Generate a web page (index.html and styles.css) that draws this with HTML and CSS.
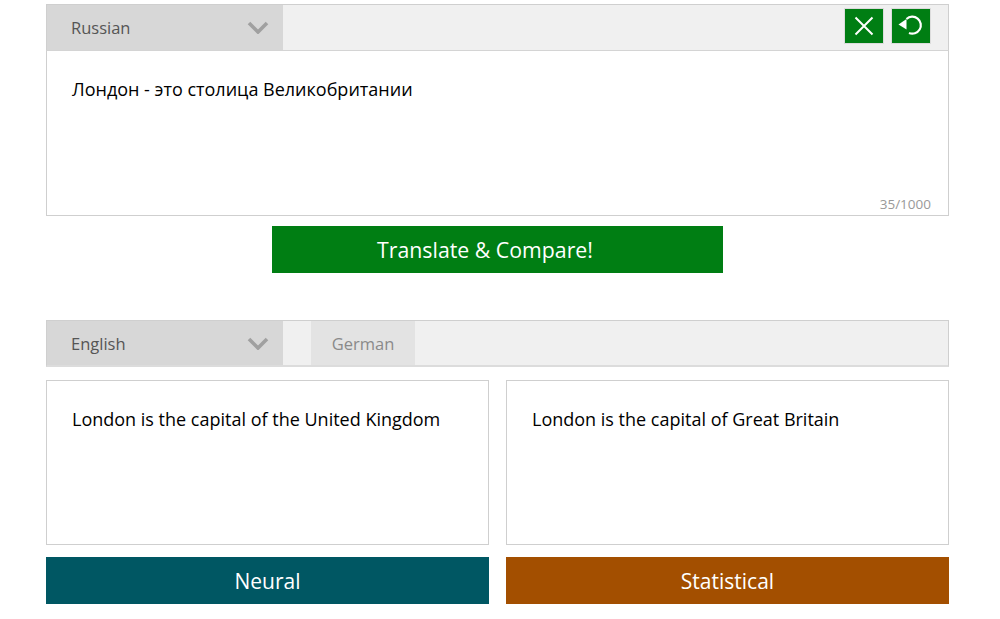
FILE: index.html
```html
<!DOCTYPE html>
<html lang="en">
<head>
<meta charset="utf-8">
<title>Translate &amp; Compare</title>
<link rel="stylesheet" href="styles.css">
</head>
<body>
<main class="page">
  <section class="source">
    <div class="bar bar-source">
      <div class="select"><span>Russian</span>
        <svg class="chev" width="22" height="13" viewBox="0 0 22 13"><path d="M2 2l9 9 9-9" fill="none" stroke="#a0a0a0" stroke-width="3.6"/></svg>
      </div>
      <div class="tools">
        <button class="tool" aria-label="Clear"><svg width="20" height="20" viewBox="0 0 20 20"><path d="M1.500 1.500l17 17M18.500 1.500l-17 17" fill="none" stroke="#fff" stroke-width="2"/></svg></button>
        <button class="tool" aria-label="Undo"><svg width="26" height="26" viewBox="0 0 26 26"><path d="M8.500 6a8.500 8.500 0 1 1 2.500 14" fill="none" stroke="#fff" stroke-width="2.200"/><path d="M0.500 11.500l8-5.500v10.500z" fill="#fff"/></svg></button>
      </div>
    </div>
    <div class="input-area">
      <p class="text">Лондон - это столица Великобритании</p>
      <span class="count">35/1000</span>
    </div>
  </section>
  <button class="cta">Translate &amp; Compare!</button>
  <div class="bar bar-target">
    <div class="select"><span>English</span>
      <svg class="chev" width="22" height="13" viewBox="0 0 22 13"><path d="M2 2l9 9 9-9" fill="none" stroke="#a0a0a0" stroke-width="3.6"/></svg>
    </div>
    <div class="tab">German</div>
  </div>
  <div class="results">
    <div class="result">
      <div class="output"><p class="text">London is the capital of the United Kingdom</p></div>
      <div class="label neural">Neural</div>
    </div>
    <div class="result">
      <div class="output"><p class="text">London is the capital of Great Britain</p></div>
      <div class="label statistical">Statistical</div>
    </div>
  </div>
</main>
</body>
</html>
```
FILE: styles.css
```css
* { box-sizing: border-box; }
html, body { margin: 0; background: #fff; }
body { font-family: "Open Sans", "Noto Sans", sans-serif; color: #000; }
.page { width: 903px; margin-left: 46px; padding-top: 4px; display: flex; flex-direction: column; }
.source { display: flex; flex-direction: column; }
.bar { height: 47px; background: #f0f0f0; border: 1px solid #cfcfcf; display: flex; align-items: stretch; }
.bar-source { border-bottom-color: #d4d4d4; justify-content: space-between; }
.bar-target { margin-top: 47px; border-bottom: 2px solid #dcdcdc; }
.select { width: 236px; background: #d7d7d7; display: flex; align-items: center; justify-content: space-between; padding: 0 14px 0 24px; font-size: 16.500px; color: #555; }
.tools { display: flex; align-items: center; gap: 7px; padding: 0 17px 3px 0; }
.tool { width: 40px; height: 36px; padding: 0; border: 1px solid #dcdcdc; background: #007e13; display: flex; align-items: center; justify-content: center; }
.input-area { position: relative; height: 165px; border: 1px solid #cfcfcf; border-top: 0; padding: 26px 25px; }
.text { margin: 0; font-size: 18px; line-height: 24px; }
.count { position: absolute; right: 17px; bottom: 2px; font-size: 13.500px; color: #999; }
.cta { align-self: center; width: 451px; height: 47px; margin-top: 10px; padding: 0 25px 0 0; border: 0; background: #007e13; color: #fff; font: 21.300px "Open Sans", "Noto Sans", sans-serif; }
.tab { width: 104px; margin-left: 28px; background: #e3e3e3; color: #8a8a8a; font-size: 16.500px; display: flex; align-items: center; justify-content: center; }
.results { display: grid; grid-template-columns: 443px 443px; gap: 17px; margin-top: 13px; }
.result { display: flex; flex-direction: column; gap: 12px; }
.output { height: 165px; border: 1px solid #cfcfcf; padding: 26px 25px; }
.label { height: 47px; color: #fff; font-size: 21px; display: flex; align-items: center; justify-content: center; }
.neural { background: #005763; }
.statistical { background: #a34f00; }
```
